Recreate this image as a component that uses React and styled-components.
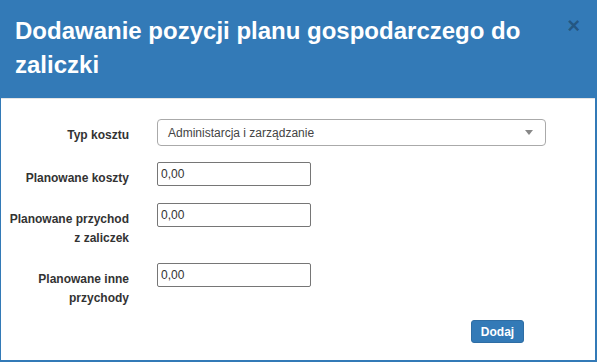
import React from "react";
import styled, { createGlobalStyle } from "styled-components";

const GlobalStyle = createGlobalStyle`
  html, body {
    margin: 0;
    padding: 0;
    background: #fff;
  }
  body {
    font-family: "Liberation Sans", Arial, sans-serif;
    color: #333;
  }
`;

const fields = [
  { label: "Planowane koszty", value: "0,00" },
  { label: "Planowane przychod z zaliczek", value: "0,00" },
  { label: "Planowane inne przychody", value: "0,00" },
];

const App = () => {
  return (
    <>
      <GlobalStyle />
      <Modal>
        <Header>
          <Title>Dodawanie pozycji planu gospodarczego do zaliczki</Title>
          <Close type="button" aria-label="Zamknij">
            ×
          </Close>
        </Header>
        <Body>
          <Row $first>
            <Label>Typ kosztu</Label>
            <Select>
              <span>Administarcja i zarządzanie</span>
              <Arrow />
            </Select>
          </Row>
          {fields.map((f) => (
            <Row key={f.label}>
              <Label>{f.label}</Label>
              <Input type="text" defaultValue={f.value} />
            </Row>
          ))}
          <Footer>
            <Button type="button">Dodaj</Button>
          </Footer>
        </Body>
      </Modal>
    </>
  );
};

export default App;

const Modal = styled.div`
  width: 597px;
  height: 362px;
  box-sizing: border-box;
  border: 1px solid #337ab7;
  border-right-width: 2px;
  border-bottom-width: 2px;
  border-top: none;
  display: flex;
  flex-direction: column;
  overflow: hidden;
`;

const Header = styled.div`
  background: #337ab7;
  height: 99px;
  box-sizing: border-box;
  border-bottom: 1px solid #e5e5e5;
  padding: 14px 14px 0 14px;
  display: flex;
  align-items: flex-start;
  justify-content: space-between;
`;

const Title = styled.h4`
  margin: 0;
  color: #fff;
  font-size: 24px;
  font-weight: 700;
  line-height: 34px;
  width: 520px;
`;

const Close = styled.button`
  background: none;
  border: none;
  padding: 0;
  margin: 1px 1px 0 0;
  color: rgba(0, 0, 0, 0.3);
  font-family: "Liberation Sans", Arial, sans-serif;
  font-size: 22px;
  font-weight: 700;
  line-height: 22px;
  cursor: pointer;
`;

const Body = styled.div`
  padding: 20px 8px 0 7px;
  display: flex;
  flex-direction: column;
  gap: 15px;
`;

const Row = styled.div`
  display: grid;
  grid-template-columns: 121px auto;
  column-gap: 28px;
  align-items: start;
  margin-bottom: ${(p) => (p.$first ? "1px" : "0")};
`;

const Label = styled.label`
  text-align: right;
  font-size: 12px;
  font-weight: 700;
  line-height: 19px;
  padding-top: 7px;
  color: #333;
`;

const Select = styled.div`
  width: 389px;
  height: 27px;
  box-sizing: border-box;
  border: 1px solid #aaa;
  border-radius: 4px;
  padding: 0 12px 0 10px;
  display: flex;
  align-items: center;
  justify-content: space-between;
  font-size: 12px;
  color: #444;
`;

const Arrow = styled.span`
  width: 0;
  height: 0;
  border-left: 4px solid transparent;
  border-right: 4px solid transparent;
  border-top: 5px solid #888;
`;

const Input = styled.input`
  width: 154px;
  height: 24px;
  box-sizing: border-box;
  border: 1px solid #767676;
  border-radius: 2px;
  padding: 1px 3px;
  font-family: "Liberation Sans", Arial, sans-serif;
  font-size: 12px;
  color: #333;
  outline: none;
`;

const Footer = styled.div`
  display: flex;
  justify-content: flex-end;
  padding-right: 63px;
  margin-top: -3px;
`;

const Button = styled.button`
  width: 53px;
  height: 23px;
  background: #337ab7;
  border: 1px solid #2e6da4;
  border-radius: 3px;
  color: #fff;
  font-family: "Liberation Sans", Arial, sans-serif;
  font-size: 12px;
  font-weight: 700;
  padding: 0;
  cursor: pointer;
`;
